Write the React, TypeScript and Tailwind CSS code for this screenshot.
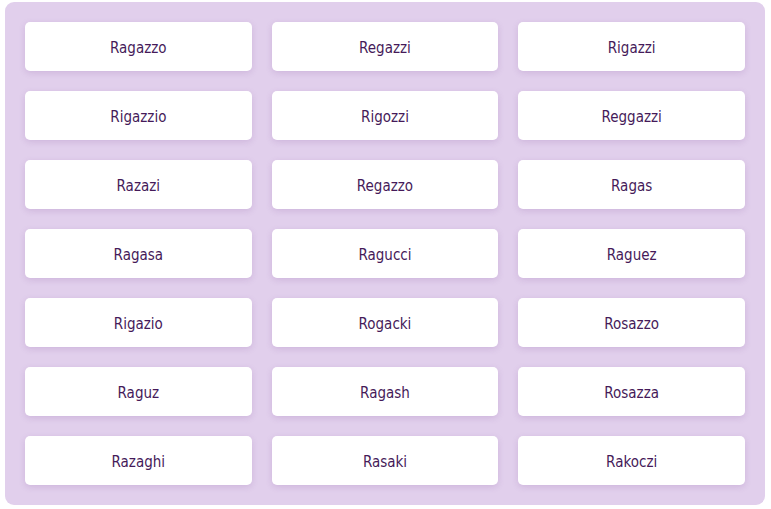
import React from "react";

const names = [
  "Ragazzo", "Regazzi", "Rigazzi",
  "Rigazzio", "Rigozzi", "Reggazzi",
  "Razazi", "Regazzo", "Ragas",
  "Ragasa", "Ragucci", "Raguez",
  "Rigazio", "Rogacki", "Rosazzo",
  "Raguz", "Ragash", "Rosazza",
  "Razaghi", "Rasaki", "Rakoczi",
];

export default function App() {
  return (
    <div className="w-[771px] h-[509px] bg-white pt-[2px] pl-[5px]">
      <div className="w-[760px] rounded-[9px] bg-[#e1cfec] p-5 grid grid-cols-3 gap-5">
        {names.map((name) => (
          <div
            key={name}
            className="h-[49px] pt-[4px] rounded-[5px] bg-white shadow-[0_2px_6px_rgba(120,70,150,0.18)] flex items-center justify-center text-[15px] text-[#451a59] [font-family:'DejaVu_Sans_Condensed','DejaVu_Sans',sans-serif] [font-stretch:condensed]"
          >
            {name}
          </div>
        ))}
      </div>
    </div>
  );
}
